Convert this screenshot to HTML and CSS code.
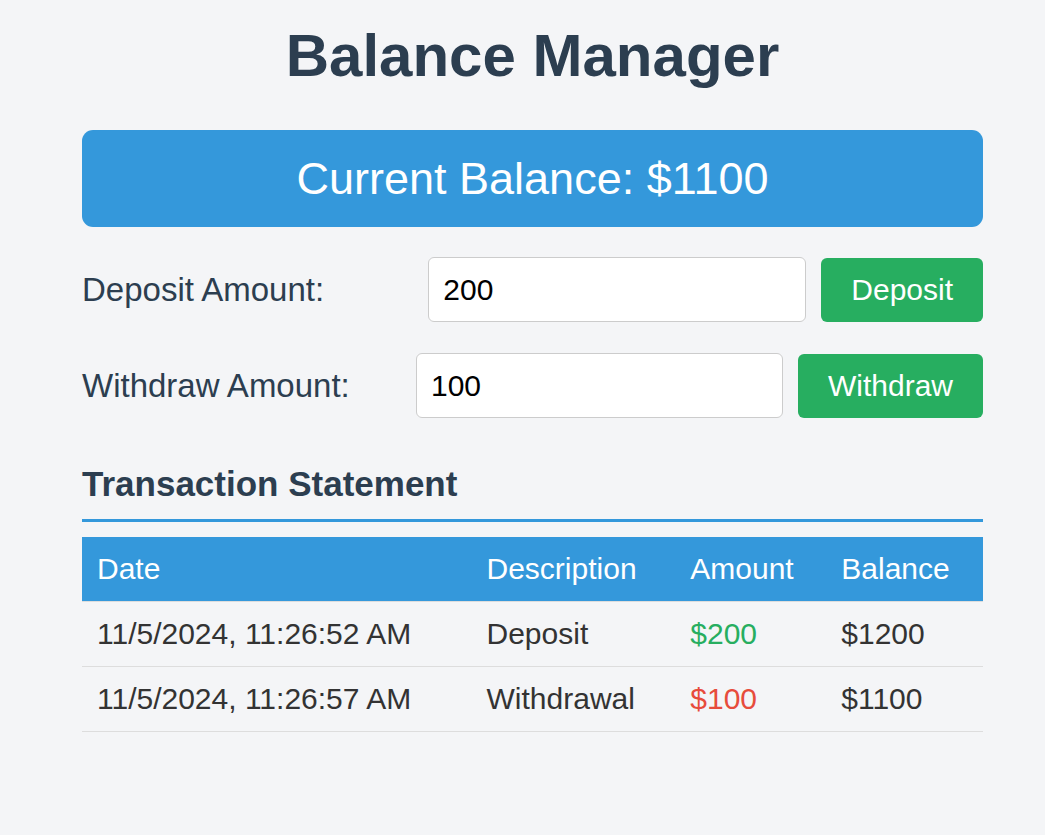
FILE: index.html
```html
<!DOCTYPE html>
<html lang="en">
<head>
<meta charset="utf-8">
<title>Balance Manager</title>
<link rel="stylesheet" href="styles.css">
</head>
<body>
<div class="container">
  <h1 class="title">Balance Manager</h1>
  <div class="balance-card">Current Balance: $1100</div>

  <div class="field-row">
    <label class="field-label" for="deposit">Deposit Amount:</label>
    <input class="amount-input amount-input--deposit" id="deposit" type="number" value="200">
    <button class="action-btn">Deposit</button>
  </div>

  <div class="field-row">
    <label class="field-label" for="withdraw">Withdraw Amount:</label>
    <input class="amount-input amount-input--withdraw" id="withdraw" type="number" value="100">
    <button class="action-btn">Withdraw</button>
  </div>

  <h3 class="section-title">Transaction Statement</h3>
  <table class="statement">
    <thead>
      <tr><th>Date</th><th>Description</th><th>Amount</th><th>Balance</th></tr>
    </thead>
    <tbody>
      <tr><td>11/5/2024, 11:26:52 AM</td><td>Deposit</td><td class="amt-in">$200</td><td>$1200</td></tr>
      <tr><td>11/5/2024, 11:26:57 AM</td><td>Withdrawal</td><td class="amt-out">$100</td><td>$1100</td></tr>
    </tbody>
  </table>
</div>
</body>
</html>
```
FILE: styles.css
```css
html, body {
  margin: 0;
  background: #f4f5f7;
}
body {
  padding: 0 0 0 20px;
  font-family: "Liberation Sans", Arial, sans-serif;
  color: #2c3e50;
}
.container {
  width: 901px;
  margin: 0 auto;
  padding-top: 21px;
}
.title {
  margin: 0 0 40px;
  font-size: 60px;
  font-weight: bold;
  text-align: center;
  line-height: normal;
  color: #2c3e50;
}
.balance-card {
  background: #3498db;
  color: #fff;
  border-radius: 11px;
  padding: 22.5px 0;
  font-size: 45px;
  text-align: center;
  margin-bottom: 30.3px;
}
.field-row {
  display: flex;
  align-items: center;
  gap: 15px;
  margin-bottom: 31px;
}
.field-label {
  flex: 1;
  font-size: 33px;
  color: #2c3e50;
}
.amount-input {
  box-sizing: border-box;
  height: 65px;
  padding: 0 14px;
  border: 1px solid #ccc;
  border-radius: 6px;
  background: #fff;
  font-family: "Liberation Sans", Arial, sans-serif;
  font-size: 30px;
  color: #000;
  outline: none;
  -moz-appearance: textfield;
}
.amount-input::-webkit-outer-spin-button,
.amount-input::-webkit-inner-spin-button {
  -webkit-appearance: none;
  margin: 0;
}
.amount-input--deposit { width: 378px; }
.amount-input--withdraw { width: 367px; }
.action-btn {
  height: 63.5px;
  padding: 0 30px;
  border: none;
  border-radius: 6px;
  background: #27ae60;
  color: #fff;
  font-family: "Liberation Sans", Arial, sans-serif;
  font-size: 30px;
}
.section-title {
  margin: 45.5px 0 15px;
  padding-bottom: 15px;
  border-bottom: 3px solid #3498db;
  font-size: 35px;
  font-weight: bold;
  line-height: normal;
  color: #2c3e50;
}
.statement {
  width: 100%;
  border-collapse: collapse;
  font-size: 30px;
}
.statement th,
.statement td {
  padding: 15px;
  text-align: left;
  border-bottom: 1px solid #ddd;
}
.statement th {
  background: #3498db;
  color: #fff;
  font-weight: normal;
}
.statement td {
  color: #333;
}
.statement .amt-in { color: #27ae60; }
.statement .amt-out { color: #e74c3c; }
```
